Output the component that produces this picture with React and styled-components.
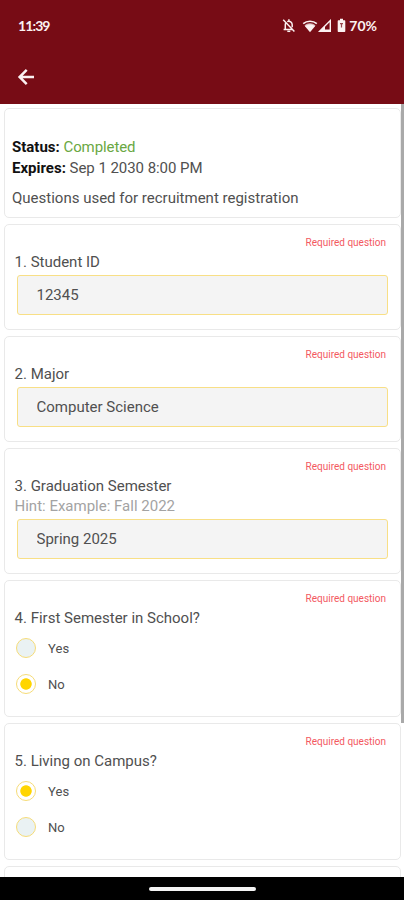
import React, { useState } from "react";
import styled, { createGlobalStyle } from "styled-components";

const GlobalStyle = createGlobalStyle`
  * {
    box-sizing: border-box;
  }

  body {
    margin: 0;
    background: #fff;
    font-family: Roboto, "Liberation Sans", sans-serif;
    font-size: 15px;
    color: #505050;
  }
`;

// Styled Components

const Screen = styled.div`
  display: flex;
  flex-direction: column;
  width: 404px;
  height: 900px;
  overflow: hidden;
`;

const Header = styled.header`
  flex: none;
  height: 104px;
  color: #fbf1f1;
  background: #770c15;
`;

const StatusBar = styled.div`
  display: flex;
  align-items: center;
  justify-content: space-between;
  height: 51px;
  padding: 0 27px 0 18px;
`;

const Clock = styled.span`
  font-family: Lato, sans-serif;
  font-size: 14px;
  font-weight: 700;
  letter-spacing: -0.9px;
`;

const StatusIcons = styled.div`
  display: flex;
  align-items: center;

  svg {
    display: block;
  }
`;

const Battery = styled.span`
  margin-left: 3px;
  font-family: Lato, sans-serif;
  font-size: 14px;
  font-weight: 700;
`;

const BackButton = styled.button`
  display: flex;
  margin: 14px 0 0 14px;
  padding: 0;
  color: inherit;
  background: none;
  border: none;
  cursor: pointer;
`;

const Body = styled.div`
  display: flex;
  flex: 1;
  min-height: 0;
`;

const List = styled.main`
  display: flex;
  flex: 1;
  flex-direction: column;
  gap: 6px;
  padding: 4px 0 0 4px;
  overflow: hidden;
`;

const Scrollbar = styled.div`
  width: 3px;
  height: 619px;
  background: #a9a9a9;
`;

const Card = styled.section`
  flex: none;
  padding: 12px 12px 14px 9.5px;
  border: 1px solid #e9e9e9;
  border-radius: 5px;
`;

const Summary = styled(Card)`
  height: 110px;
  padding: 28px 7px 0;
  line-height: 20.5px;
`;

const Label = styled.b`
  font-weight: 700;
  color: #111;
`;

const Completed = styled.span`
  color: #6aa843;
  letter-spacing: -0.1px;
`;

const Expires = styled.span`
  letter-spacing: -0.05px;
`;

const Description = styled.p`
  margin: 10px 0 0;
`;

const Required = styled.div`
  margin-right: 2px;
  font-size: 10px;
  line-height: 12px;
  text-align: right;
  color: #f3595f;
`;

const Question = styled.div`
  margin-top: 3px;
  line-height: 20px;
`;

const Hint = styled.div`
  line-height: 20px;
  color: #a3a3a3;
`;

const Input = styled.input`
  display: block;
  width: calc(100% - 2px);
  height: 40px;
  margin: 3px 0 0 2px;
  padding: 0 19px;
  font: inherit;
  color: #505050;
  background: #f4f4f4;
  border: 1px solid #f8df86;
  border-radius: 3px;
  outline: none;
`;

const Options = styled.div`
  display: flex;
  flex-direction: column;
  gap: 16px;
  padding: 10px 0 8px 1.5px;
`;

const Option = styled.label`
  display: flex;
  align-items: center;
  gap: 12px;
  height: 20px;
  font-size: 13px;
  letter-spacing: 0.05px;
`;

const Radio = styled.input`
  appearance: none;
  width: 20px;
  height: 20px;
  margin: 0;
  background: #eaf2f3;
  border: 1px solid #f6dc78;
  border-radius: 50%;

  &:checked {
    background: radial-gradient(circle, #ffd500 5.3px, #fff 6.1px);
  }
`;

const NavBar = styled.footer`
  display: flex;
  flex: none;
  align-items: center;
  justify-content: center;
  height: 23px;
  background: #000;
`;

const Handle = styled.div`
  width: 107px;
  height: 4px;
  background: #f4f4f4;
  border-radius: 2px;
`;

const Spacer = styled.span`
  width: ${(p) => p.$w}px;
`;

// Header icons

const ArrowBack = () => (
  <svg width="24" height="24" viewBox="0 0 24 24" fill="none" stroke="currentColor" strokeWidth="2.5">
    <path d="M20 12H6M12.700 4.900 5.600 12l7.100 7.100" />
  </svg>
);

const BellOff = () => (
  <svg width="14" height="15" viewBox="0 0 14 15" fill="none" stroke="currentColor" strokeWidth="1.5">
    <path d="M1.200 1.800 12.400 13.600M1.600 11.400h8.800M3.300 11V6.800c0-.9.2-1.600.6-2.200M5.200 3.600C8 2.400 10.200 4.200 10.200 6.800v2.400M6.900 1.300v1.700" />
    <path d="M5.300 13.300h3" />
  </svg>
);

const Wifi = () => (
  <svg width="16" height="14" viewBox="0 0 16 14" fill="currentColor">
    <path d="M8 13.200 3 7.200C5.800 5 10.200 5 13 7.200Z" />
    <path d="M1.200 4.700C5 1.400 11 1.400 14.800 4.700" fill="none" stroke="currentColor" strokeWidth="1.700" />
    <path d="M2.500 6.400C5.600 3.400 10.400 3.400 13.500 6.400L12.400 7.800C9.700 5.600 6.300 5.600 3.600 7.800Z" opacity=".75" />
  </svg>
);

const Signal = () => (
  <svg width="14" height="14" viewBox="0 0 14 14">
    <path d="M1.600 12.300 12.300 1.600V12.300Z" fill="none" stroke="currentColor" strokeWidth="1.400" />
    <path d="M1 13 7 7V10.500H12V13Z" fill="currentColor" />
  </svg>
);

const BatteryIcon = () => (
  <svg width="9" height="15" viewBox="0 0 9 15" fill="currentColor">
    <path d="M3 .8h3v1.400h1.300c.6 0 1 .4 1 1v9.800c0 .6-.4 1-1 1H1.700c-.6 0-1-.4-1-1V3.200c0-.6.4-1 1-1H3Z" />
    <path d="M4.500 5v4.500M3 5.700h3" fill="none" stroke="#770c15" strokeWidth="1.200" opacity=".75" />
  </svg>
);

// Form data

const questions = [
  { id: 1, title: "Student ID", value: "12345" },
  { id: 2, title: "Major", value: "Computer Science" },
  {
    id: 3,
    title: "Graduation Semester",
    hint: "Example: Fall 2022",
    value: "Spring 2025",
  },
  { id: 4, title: "First Semester in School?", value: "No", options: ["Yes", "No"] },
  { id: 5, title: "Living on Campus?", value: "Yes", options: ["Yes", "No"] },
];

function QuestionCard({ question }) {
  const { id, title, hint, options } = question;
  const [value, setValue] = useState(question.value);

  return (
    <Card>
      <Required>Required question</Required>
      <Question>
        {id}. {title}
      </Question>
      {hint && <Hint>Hint: {hint}</Hint>}
      {options ? (
        <Options>
          {options.map((o) => (
            <Option key={o}>
              <Radio
                type="radio"
                name={`question-${id}`}
                checked={value === o}
                onChange={() => setValue(o)}
              />
              {o}
            </Option>
          ))}
        </Options>
      ) : (
        <Input value={value} onChange={(e) => setValue(e.target.value)} />
      )}
    </Card>
  );
}

function App() {
  return (
    <Screen>
      <GlobalStyle />
      <Header>
        <StatusBar>
          <Clock>11:39</Clock>
          <StatusIcons>
            <BellOff />
            <Spacer $w={6} />
            <Wifi />
            <Signal />
            <Spacer $w={5} />
            <BatteryIcon />
            <Battery>70%</Battery>
          </StatusIcons>
        </StatusBar>
        <BackButton aria-label="Back">
          <ArrowBack />
        </BackButton>
      </Header>
      <Body>
        <List>
          <Summary>
            <div>
              <Label>Status:</Label> <Completed>Completed</Completed>
            </div>
            <div>
              <Label>Expires:</Label> <Expires>Sep 1 2030 8:00 PM</Expires>
            </div>
            <Description>Questions used for recruitment registration</Description>
          </Summary>
          {questions.map((q) => (
            <QuestionCard key={q.id} question={q} />
          ))}
          <Card />
        </List>
        <Scrollbar />
      </Body>
      <NavBar>
        <Handle />
      </NavBar>
    </Screen>
  );
}

export default App;
